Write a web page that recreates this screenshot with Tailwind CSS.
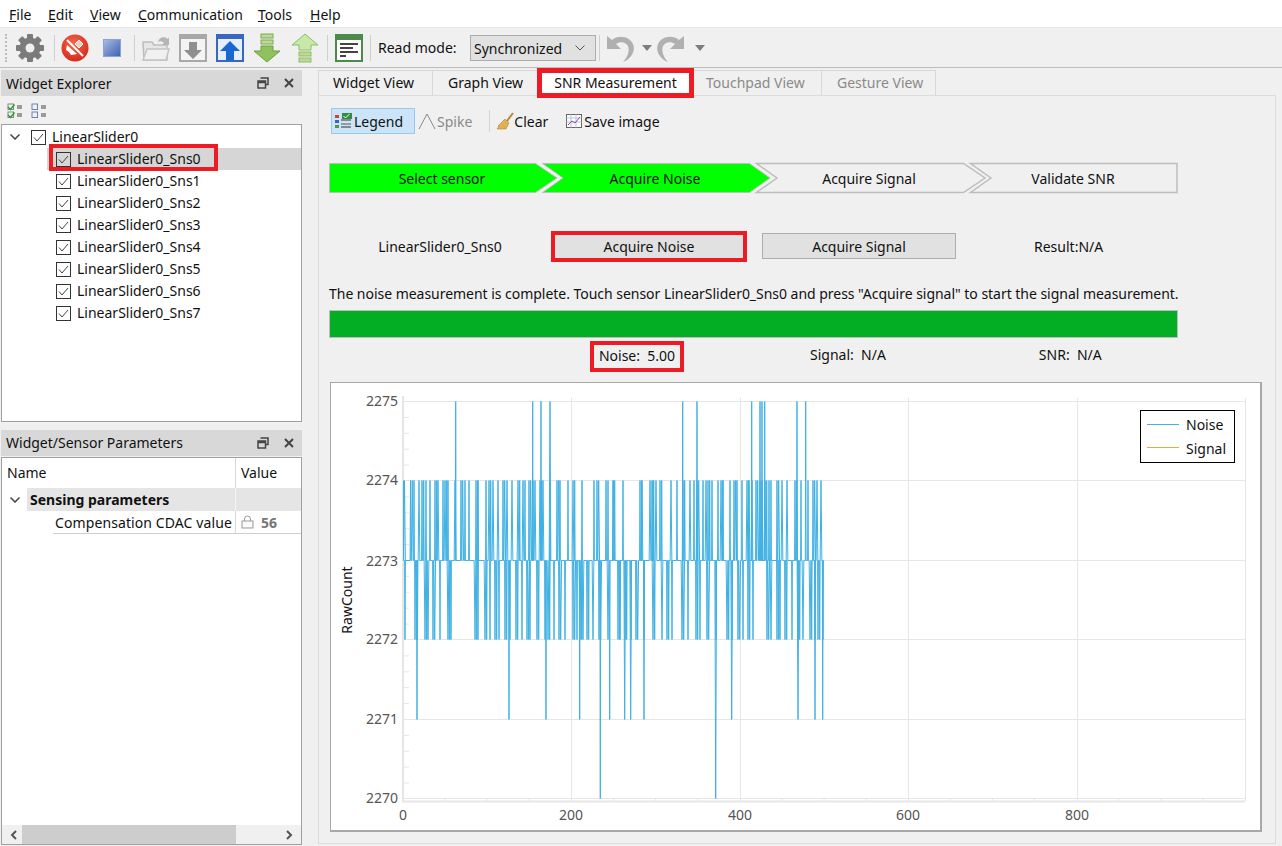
<!DOCTYPE html>
<html lang="en">
<head>
    <meta charset="UTF-8">
    <title>Tuner</title>
    <script src="https://cdn.jsdelivr.net/npm/@tailwindcss/browser@4"></script>
</head>
<body class="w-[1282px] h-[846px] overflow-hidden bg-[#f0f0f0] text-[14px] leading-[20px] text-[#111] font-['Noto_Sans','Open_Sans',sans-serif]">

    <!-- menu -->
    <div class="flex items-center h-[28px] bg-white border-b border-[#e6e6e6] pl-[9px] pt-[3px]">
        <span class="w-[39px]"><u>F</u>ile</span>
        <span class="w-[42px]"><u>E</u>dit</span>
        <span class="w-[48px]"><u>V</u>iew</span>
        <span class="w-[120px]"><u>C</u>ommunication</span>
        <span class="w-[52px]"><u>T</u>ools</span>
        <span><u>H</u>elp</span>
    </div>

    <!-- toolbar -->
    <div class="flex items-center h-[40px] border-b border-[#bcbcbc] pl-[5px]">
        <div class="w-[3px] h-[28px] border-l-2 border-dotted border-[#bbb] mr-[7px]"></div>
        <svg class="w-[30px] h-[30px]" viewBox="0 0 30 30">
            <g fill="#7b7b7b">
                <rect x="12" y="1" width="6" height="28" rx="1"/>
                <rect x="12" y="1" width="6" height="28" rx="1" transform="rotate(45 15 15)"/>
                <rect x="12" y="1" width="6" height="28" rx="1" transform="rotate(90 15 15)"/>
                <rect x="12" y="1" width="6" height="28" rx="1" transform="rotate(135 15 15)"/>
            </g>
            <circle cx="15" cy="15" r="7.5" fill="none" stroke="#7b7b7b" stroke-width="6"/>
            <circle cx="15" cy="15" r="4.5" fill="#efefef"/>
        </svg>
        <div class="w-px h-[26px] bg-[#cfcfcf] ml-[9px] mr-[6px]"></div>
        <svg class="w-[28px] h-[28px]" viewBox="0 0 28 28">
            <defs>
                <radialGradient id="redBall" cx="45%" cy="35%" r="70%"><stop offset="0" stop-color="#f4694a"/><stop offset="1" stop-color="#d5231b"/></radialGradient>
            </defs>
            <circle cx="14" cy="14" r="13.5" fill="url(#redBall)"/>
            <path d="M6 11l10 9-6 1-2-3-3-2z" fill="#fff"/>
            <path d="M14 10l4-4 4 4-4 4z" fill="#f6c9b8" stroke="#fff"/>
            <path d="M6 6l16 16" stroke="#fff" stroke-width="2"/>
        </svg>
        <svg class="w-[18px] h-[18px] ml-[14px]" viewBox="0 0 18 18">
            <defs>
                <linearGradient id="stopBlue" x1="0" y1="0" x2="1" y2="1"><stop offset="0" stop-color="#a9bde6"/><stop offset="1" stop-color="#3d5fae"/></linearGradient>
            </defs>
            <rect x="0.5" y="0.5" width="17" height="17" fill="url(#stopBlue)" stroke="#8ea3d0"/>
        </svg>
        <div class="w-px h-[26px] bg-[#cfcfcf] ml-[13px] mr-[6px]"></div>
        <svg class="w-[30px] h-[30px]" viewBox="0 0 30 30">
            <path d="M3 27L2 9h9l2 3h13v15z" fill="#e6e6e6" stroke="#bdbdbd" stroke-width="1.5"/>
            <path d="M2 27l4-11h22l-3 11z" fill="#f0f0f0" stroke="#c4c4c4" stroke-width="1.5"/>
            <path d="M17 9c1-5 6-6 10-3l1-2v8h-7l2-2c-2-2-4-2-6-1z" fill="#b5b5b5"/>
        </svg>
        <svg class="w-[28px] h-[28px] ml-[8px]" viewBox="0 0 28 28">
            <rect x="1" y="1" width="26" height="26" fill="#f4f4f4" stroke="#a8a8a8" stroke-width="2"/>
            <rect x="1" y="1" width="26" height="4" fill="#a8a8a8"/>
            <path d="M10 8h8v8h5l-9 9-9-9h5z" fill="#8f8f8f"/>
        </svg>
        <svg class="w-[28px] h-[28px] ml-[9px]" viewBox="0 0 28 28">
            <rect x="1" y="1" width="26" height="26" fill="#e6eefb" stroke="#3767c0" stroke-width="2"/>
            <rect x="1" y="1" width="26" height="4" fill="#3767c0"/>
            <path d="M14 7l10 10h-6v9h-8v-9H4z" fill="#1a66d0"/>
        </svg>
        <svg class="w-[28px] h-[30px] ml-[9px]" viewBox="0 0 28 30">
            <rect x="8" y="1" width="12" height="4" fill="#bcd99a" stroke="#7eaa4e"/>
            <rect x="8" y="7" width="12" height="4" fill="#bcd99a" stroke="#7eaa4e"/>
            <path d="M8 13h12v5h7L14 29 1 18h7z" fill="#8fc25d" stroke="#6f9f42"/>
        </svg>
        <svg class="w-[28px] h-[30px] ml-[10px]" viewBox="0 0 28 30">
            <path d="M14 1l13 11h-7v5H8v-5H1z" fill="#c9e8a8" stroke="#8dbd62"/>
            <rect x="8" y="19" width="12" height="4" fill="#bcd99a" stroke="#8dbd62"/>
            <rect x="8" y="25" width="12" height="4" fill="#bcd99a" stroke="#8dbd62"/>
        </svg>
        <div class="w-px h-[26px] bg-[#cfcfcf] ml-[8px] mr-[7px]"></div>
        <svg class="w-[28px] h-[28px]" viewBox="0 0 28 28">
            <rect x="1" y="1" width="26" height="26" fill="#fff" stroke="#4c8a4c" stroke-width="2"/>
            <rect x="1" y="1" width="26" height="5" fill="#4c8a4c"/>
            <path d="M5 10h18M5 14h13M5 18h18M5 22h6" stroke="#444" stroke-width="2"/>
        </svg>
        <div class="w-px h-[26px] bg-[#cfcfcf] ml-[7px] mr-[7px]"></div>
        <span class="w-[92px]">Read mode:</span>
        <div class="flex items-center justify-between w-[126px] h-[26px] bg-[#e1e1e1] border border-[#adadad] pl-[3px] pr-[10px]">
            <span class="pt-[2px]">Synchronized</span>
            <svg class="w-[10px] h-[6px]" viewBox="0 0 10 6"><path d="M0.5 0.5L5 5l4.5-4.5" fill="none" stroke="#555"/></svg>
        </div>
        <div class="w-px h-[26px] bg-[#cfcfcf] mx-[3px]"></div>
        <svg class="w-[32px] h-[28px] ml-[2px]" viewBox="0 0 32 28">
            <path d="M2 2V15H16L11 10C15 7 21 8 23 12 25 17 22 24 18 28 26 25 31 17 28 10 25 3 14 0 7 6Z" fill="#b0b0b0"/>
        </svg>
        <svg class="w-[10px] h-[6px] ml-[5px]" viewBox="0 0 10 6"><path d="M0 0h10L5 6z" fill="#7d7d7d"/></svg>
        <svg class="w-[32px] h-[28px] ml-[2px]" viewBox="0 0 32 28">
            <path d="M30 2V15H16L21 10C17 7 11 8 9 12 7 17 10 24 14 28 6 25 1 17 4 10 7 3 18 0 25 6Z" fill="#b0b0b0"/>
        </svg>
        <svg class="w-[10px] h-[6px] ml-[9px]" viewBox="0 0 10 6"><path d="M0 0h10L5 6z" fill="#7d7d7d"/></svg>
    </div>

    <div class="flex h-[778px]">
        <!-- left docks -->
        <aside class="flex flex-col w-[301px] ml-px pt-[2px] pb-[1px] shrink-0">
            <div class="flex items-center justify-between h-[26px] bg-[#d8d8d8] pl-[5px] pr-[7px]">
                <span class="pt-[2px]">Widget Explorer</span>
                <div class="flex items-center gap-[14px]">
                    <svg class="w-[12px] h-[12px]" viewBox="0 0 12 12"><path d="M3.500 1h7.500v6.500H8.500M1 4h7.500v7H1zM1 5.500h7.500" fill="none" stroke="#444" stroke-width="1.500"/></svg>
                    <svg class="w-[12px] h-[12px]" viewBox="0 0 12 12"><path d="M2 2l8 8M10 2l-8 8" stroke="#444" stroke-width="2"/></svg>
                </div>
            </div>
            <div class="flex items-center gap-[8px] h-[28px] pl-[6px] pt-[2px]">
                <svg class="w-[16px] h-[16px]" viewBox="0 0 16 16">
                    <rect x="1" y="1" width="5.500" height="5.500" fill="none" stroke="#888"/><rect x="1" y="9" width="5.500" height="5.500" fill="none" stroke="#888"/>
                    <path d="M1 4l2.500 2.500 4-5M1 12l2.500 2.500 4-5" fill="none" stroke="#2aa02a" stroke-width="1.500"/>
                    <path d="M10 3h5M10 5h5M10 11h5M10 13h5" stroke="#444"/>
                </svg>
                <svg class="w-[16px] h-[16px]" viewBox="0 0 16 16">
                    <rect x="1" y="1" width="5.500" height="5.500" fill="none" stroke="#6a83b0"/><rect x="1" y="9" width="5.500" height="5.500" fill="none" stroke="#6a83b0"/>
                    <path d="M10 3h5M10 5h5M10 11h5M10 13h5" stroke="#444"/>
                </svg>
            </div>
            <div class="relative h-[298px] bg-white border border-[#a0a0a0] pt-[1px]">
                <div class="flex items-center h-[22px]">
                    <svg class="w-[10px] h-[6px] ml-[8px]" viewBox="0 0 10 6"><path d="M0.500 0.500L5 5l4.500-4.500" fill="none" stroke="#444" stroke-width="1.500"/></svg>
                    <span class="flex items-center justify-center w-[15px] h-[15px] border border-[#333] ml-[11px]"><svg class="w-[11px] h-[9px]" viewBox="0 0 11 9"><path d="M1 4.500L4 8l6-7" fill="none" stroke="#444"/></svg></span>
                    <span class="ml-[6px]">LinearSlider0</span>
                </div>
                <div class="flex items-center h-[22px] ml-[45px] pl-[9px] bg-[#d6d6d6]">
                    <span class="flex items-center justify-center w-[15px] h-[15px] border border-[#333]"><svg class="w-[11px] h-[9px]" viewBox="0 0 11 9"><path d="M1 4.500L4 8l6-7" fill="none" stroke="#444"/></svg></span>
                    <span class="ml-[6px]">LinearSlider0_Sns0</span>
                </div>
                <div class="flex items-center h-[22px] ml-[45px] pl-[9px]">
                    <span class="flex items-center justify-center w-[15px] h-[15px] border border-[#333]"><svg class="w-[11px] h-[9px]" viewBox="0 0 11 9"><path d="M1 4.500L4 8l6-7" fill="none" stroke="#444"/></svg></span>
                    <span class="ml-[6px]">LinearSlider0_Sns1</span>
                </div>
                <div class="flex items-center h-[22px] ml-[45px] pl-[9px]">
                    <span class="flex items-center justify-center w-[15px] h-[15px] border border-[#333]"><svg class="w-[11px] h-[9px]" viewBox="0 0 11 9"><path d="M1 4.500L4 8l6-7" fill="none" stroke="#444"/></svg></span>
                    <span class="ml-[6px]">LinearSlider0_Sns2</span>
                </div>
                <div class="flex items-center h-[22px] ml-[45px] pl-[9px]">
                    <span class="flex items-center justify-center w-[15px] h-[15px] border border-[#333]"><svg class="w-[11px] h-[9px]" viewBox="0 0 11 9"><path d="M1 4.500L4 8l6-7" fill="none" stroke="#444"/></svg></span>
                    <span class="ml-[6px]">LinearSlider0_Sns3</span>
                </div>
                <div class="flex items-center h-[22px] ml-[45px] pl-[9px]">
                    <span class="flex items-center justify-center w-[15px] h-[15px] border border-[#333]"><svg class="w-[11px] h-[9px]" viewBox="0 0 11 9"><path d="M1 4.500L4 8l6-7" fill="none" stroke="#444"/></svg></span>
                    <span class="ml-[6px]">LinearSlider0_Sns4</span>
                </div>
                <div class="flex items-center h-[22px] ml-[45px] pl-[9px]">
                    <span class="flex items-center justify-center w-[15px] h-[15px] border border-[#333]"><svg class="w-[11px] h-[9px]" viewBox="0 0 11 9"><path d="M1 4.500L4 8l6-7" fill="none" stroke="#444"/></svg></span>
                    <span class="ml-[6px]">LinearSlider0_Sns5</span>
                </div>
                <div class="flex items-center h-[22px] ml-[45px] pl-[9px]">
                    <span class="flex items-center justify-center w-[15px] h-[15px] border border-[#333]"><svg class="w-[11px] h-[9px]" viewBox="0 0 11 9"><path d="M1 4.500L4 8l6-7" fill="none" stroke="#444"/></svg></span>
                    <span class="ml-[6px]">LinearSlider0_Sns6</span>
                </div>
                <div class="flex items-center h-[22px] ml-[45px] pl-[9px]">
                    <span class="flex items-center justify-center w-[15px] h-[15px] border border-[#333]"><svg class="w-[11px] h-[9px]" viewBox="0 0 11 9"><path d="M1 4.500L4 8l6-7" fill="none" stroke="#444"/></svg></span>
                    <span class="ml-[6px]">LinearSlider0_Sns7</span>
                </div>
                <!-- annotation -->
                <div class="absolute left-[47px] top-[19px] w-[169px] h-[27px] border-4 border-[#ed1c24]"></div>
            </div>

            <div class="flex items-center justify-between h-[26px] bg-[#d8d8d8] pl-[5px] pr-[7px] mt-[8px]">
                <span>Widget/Sensor Parameters</span>
                <div class="flex items-center gap-[14px]">
                    <svg class="w-[12px] h-[12px]" viewBox="0 0 12 12"><path d="M3.500 1h7.500v6.500H8.500M1 4h7.500v7H1zM1 5.500h7.500" fill="none" stroke="#444" stroke-width="1.500"/></svg>
                    <svg class="w-[12px] h-[12px]" viewBox="0 0 12 12"><path d="M2 2l8 8M10 2l-8 8" stroke="#444" stroke-width="2"/></svg>
                </div>
            </div>
            <div class="flex flex-col flex-1 bg-white border border-[#a0a0a0] mt-px">
                <div class="flex-1">
                    <div class="flex items-center h-[30px]">
                        <span class="w-[234px] pl-[5px] border-r border-[#d8d8d8] h-full flex items-center">Name</span>
                        <span class="pl-[5px]">Value</span>
                    </div>
                    <div class="flex items-center h-[23px]">
                        <svg class="w-[10px] h-[6px] ml-[8px]" viewBox="0 0 10 6"><path d="M0.500 0.500L5 5l4.500-4.500" fill="none" stroke="#444" stroke-width="1.500"/></svg>
                        <div class="flex flex-1 items-center h-full ml-[7px] bg-[#e5e5e5]">
                            <span class="w-[209px] pl-[3px] font-bold border-r border-[#f4f4f4] h-full flex items-center">Sensing parameters</span>
                        </div>
                    </div>
                    <div class="flex items-center h-[23px] ml-[51px] border-b border-[#cfcfcf]">
                        <span class="w-[183px] pl-[2px] pt-[2px] tracking-[0.1px] border-r border-[#d8d8d8] h-full flex items-center whitespace-nowrap">Compensation CDAC value</span>
                        <svg class="w-[13px] h-[14px] ml-[5px]" viewBox="0 0 13 14"><path d="M3.500 6V4a3 3 0 0 1 6 0v2" fill="none" stroke="#999"/><rect x="1" y="6" width="11" height="7" fill="#fafafa" stroke="#999"/></svg>
                        <span class="ml-[7px] pt-[2px] font-bold text-[#777]">56</span>
                    </div>
                </div>
                <div class="flex items-center justify-between h-[19px] bg-[#f0f0f0]">
                    <svg class="w-[10px] h-[10px] ml-[7px]" viewBox="0 0 10 10"><path d="M7 1L3 5l4 4" fill="none" stroke="#555" stroke-width="2"/></svg>
                    <div class="w-[214px] h-full bg-[#cdcdcd] ml-[3px] mr-auto"></div>
                    <svg class="w-[10px] h-[10px] mr-[7px]" viewBox="0 0 10 10"><path d="M3 1l4 4-4 4" fill="none" stroke="#555" stroke-width="2"/></svg>
                </div>
            </div>
        </aside>

        <!-- right pane -->
        <main class="flex flex-col w-[958px] ml-[16px] pt-[2px] pb-[2px]">
            <div class="flex h-[26px] -mb-px items-stretch">
                <div class="flex items-center w-[115px] pl-[14px] bg-[#f0f0f0] border border-[#d8d8d8]">Widget View</div>
                <div class="flex items-center w-[105px] pl-[15px] border-y border-r border-[#d8d8d8]">Graph View</div>
                <div class="relative z-10 flex items-center justify-center w-[157px] h-[30px] -mt-[2px] -ml-px bg-white border-[5px] border-[#ed1c24]">SNR Measurement</div>
                <div class="flex items-center w-[128px] pl-[12px] text-[#8a8a8a] border-y border-r border-[#d8d8d8]">Touchpad View</div>
                <div class="flex items-center w-[114px] pl-[15px] text-[#8a8a8a] border-y border-r border-[#d8d8d8]">Gesture View</div>
            </div>
            <div class="flex-1 border border-[#dcdcdc] pl-[10px] pr-[14px]">
                <!-- chart tools -->
                <div class="flex items-center h-[26px] mt-[12px] pl-[2px]">
                    <div class="flex items-center w-[84px] h-[26px] bg-[#cce4f7] border border-[#99c9ee] pl-[3px]">
                        <svg class="w-[18px] h-[18px]" viewBox="0 0 18 18">
                            <rect x="0" y="3" width="4" height="3" fill="#d04040"/><rect x="0" y="8" width="4" height="3" fill="#4060c0"/><rect x="0" y="13" width="4" height="3" fill="#40a040"/>
                            <path d="M6 8h10" stroke="#333"/><path d="M6 15h10" stroke="#333"/>
                            <rect x="7" y="1" width="10" height="6" fill="#2f8f3f"/><path d="M8.500 4l2 2 4-4" fill="none" stroke="#fff"/>
                            <path d="M6 12h10" stroke="#555"/>
                        </svg>
                        <span class="ml-[1px] pt-[2px]">Legend</span>
                    </div>
                    <svg class="w-[18px] h-[18px] ml-[3px]" viewBox="0 0 18 18"><path d="M1 17L9 2l8 15" fill="none" stroke="#8a8a8a"/></svg>
                    <span class="text-[#8a8a8a] ml-[1px] pt-[2px]">Spike</span>
                    <div class="w-px h-[22px] bg-[#d4d4d4] ml-[17px] mr-[6px]"></div>
                    <svg class="w-[18px] h-[18px]" viewBox="0 0 18 18"><path d="M17 1l-6 8" stroke="#b58a3a" stroke-width="2"/><path d="M9 7l4 4-3 6H1l2-3-1 0z" fill="#e2b050" stroke="#a07a2a" stroke-width=".5"/></svg>
                    <span class="pt-[2px]">Clear</span>
                    <svg class="w-[16px] h-[16px] ml-[18px]" viewBox="0 0 16 16"><rect x=".5" y="1.500" width="15" height="13" fill="#fff" stroke="#666"/><path d="M.5 5h15M.5 9h15M5 1.500v13M10 1.500v13" stroke="#b8c6dc"/><path d="M2 12l4-4 3 2 5-6" fill="none" stroke="#a0409a"/></svg>
                    <span class="ml-[2px] pt-[2px]">Save image</span>
                </div>

                <!-- steps -->
                <svg class="block mt-[28px]" width="860" height="32" viewBox="329 162 860 32">
                    <g font-size="14" text-anchor="middle" fill="#111">
                        <path d="M329.500 163.500H535.500L557 178 535.500 192.500H329.500Z" fill="#00ff00" stroke="#bdbdbd"/>
                        <path d="M542.500 163.500H749.500L770 178 749.500 192.500H542.500L563 178Z" fill="#00ff00" stroke="#bdbdbd"/>
                        <path d="M756.500 163.500H963.500L985 178 963.500 192.500H756.500L777 178Z" fill="#f0f0f0" stroke="#bdbdbd" stroke-width="1.500"/>
                        <path d="M970.500 163.500H1177V192.500H970.500L991 178Z" fill="#f0f0f0" stroke="#bdbdbd" stroke-width="1.500"/>
                        <text x="442" y="184">Select sensor</text>
                        <text x="655" y="184">Acquire Noise</text>
                        <text x="869" y="184">Acquire Signal</text>
                        <text x="1073" y="184">Validate SNR</text>
                    </g>
                </svg>

                <!-- actions -->
                <div class="flex items-center h-[32px] mt-[36px]">
                    <div class="w-[222px] text-center pt-[2px]">LinearSlider0_Sns0</div>
                    <div class="flex items-center justify-center w-[196px] h-[31px] pt-[2px] bg-[#e1e1e1] border-4 border-[#ed1c24]">Acquire Noise</div>
                    <div class="flex items-center justify-center w-[194px] h-[26px] pt-[2px] ml-[15px] bg-[#e1e1e1] border border-[#adadad]">Acquire Signal</div>
                    <div class="ml-[78px] pt-[2px]">Result:N/A</div>
                </div>

                <p class="mt-[22px] whitespace-nowrap tracking-[-0.03px]">The noise measurement is complete. Touch sensor LinearSlider0_Sns0 and press "Acquire signal" to start the signal measurement.</p>
                <div class="w-[849px] h-[28px] mt-[6px] bg-[#04ae24] border border-[#bcbcbc]"></div>

                <div class="flex items-center h-[31px] mt-[3px]">
                    <div class="flex items-center justify-center w-[94px] h-[31px] ml-[261px] pb-[1px] border-4 border-[#ed1c24] whitespace-pre">Noise:  5.00</div>
                    <div class="ml-[126px] pb-[3px] whitespace-pre">Signal:  N/A</div>
                    <div class="ml-[153px] pb-[3px] whitespace-pre">SNR:  N/A</div>
                </div>

                <!-- chart -->
                <div class="w-[932px] h-[450px] mt-[10px] ml-px bg-white border-t border-l border-r-2 border-b-2 border-[#a8a8a8]">
                    <svg width="929" height="447" viewBox="331 383 929 447" class="block">
                        <g stroke="#e6e6e6">
                            <path d="M403 401.500H1245M403 480.500H1245M403 560.500H1245M403 639.500H1245M403 719.500H1245M403 798.500H1245"/>
                            <path d="M571.500 398V801M740.500 398V801M908.500 398V801M1077.500 398V801M1245.500 398V801"/>
                            <path d="M403 396V802M402 801.500H1245" stroke-width="2"/>
                        </g>
                        <path id="minorTicks" stroke="#e6e6e6" fill="none"/>
                        <path id="noiseLine" fill="none" stroke="#3fb1e3" stroke-width="1"/>
                        <g font-size="14" fill="#555">
                            <g text-anchor="end">
                                <text x="398" y="406">2275</text>
                                <text x="398" y="485">2274</text>
                                <text x="398" y="566">2273</text>
                                <text x="398" y="644">2272</text>
                                <text x="398" y="724">2271</text>
                                <text x="398" y="803">2270</text>
                            </g>
                            <g text-anchor="middle">
                                <text x="403" y="820">0</text>
                                <text x="571" y="820">200</text>
                                <text x="740" y="820">400</text>
                                <text x="908" y="820">600</text>
                                <text x="1077" y="820">800</text>
                            </g>
                        </g>
                        <text x="0" y="0" font-size="14" fill="#111" text-anchor="middle" transform="translate(352 600) rotate(-90)">RawCount</text>
                        <rect x="1140.500" y="410.500" width="94" height="52" fill="#fff" stroke="#000"/>
                        <path d="M1147 424.500h32" stroke="#3fb1e3"/>
                        <path d="M1147 447.500h32" stroke="#e0a94c"/>
                        <text x="1186" y="430" font-size="14" fill="#111">Noise</text>
                        <text x="1186" y="454" font-size="14" fill="#111">Signal</text>
                    </svg>
                </div>
            </div>
        </main>
    </div>

<script>
// pulses read off the plot, as pixel positions along the x axis
var high = [404.5,410.5,414,419,422,426,430,435,438,443,445,448,455,461,465,469,476,478,486,489,493,498,503,507,512,518,523,525,529,533,535,540,543,550,557,560,568,573,582,594,597,606,608,613,
    613.5,623,640,642,650,652,653,656,660,671,677,683,690,694,697,703,706,708,712,718,721,723,730,734,737,742,747,749,752,756,760,762,765,769,771,777,782,787,795,801,808,813,817,821];
var low = [405,415,417.5,425,428,433,440,448,451,475,478,485,490,495,499,505,510,516,522,527,530,537,545,548,554,559,565,573,577,580,583,587,593,599,608,618,620,625,631,636,644,653,662,667,672,682,688,696,700,707,716,727,732,738,743,748,753,767,771,777,780,785,792,798,803,810,815,818,823];
var top5 = [455.7,532.7,541,550,682.7,697,751.7,760,762,764.7,797,805.7];
var down1 = [417,509,546,579.7,609.7,624.7,630.7,644,731.7,798,815,822.7];
var down0 = [600.3,715.7];

var ev = [];
high.forEach(function(x, i) {
    ev.push([x, 480.5]);
    if (i % 3 == 1) ev.push([x + 1.7, 480.5]);
});
low.forEach(function(x, i) {
    ev.push([x, 639.5]);
    if (i % 2 == 1) ev.push([x + 1.7, 639.5]);
});
top5.forEach(function(x) { ev.push([x, 401.5]); });
down1.forEach(function(x) { ev.push([x, 719.5]); });
down0.forEach(function(x) { ev.push([x, 798.5]); });
ev.sort(function(a, b) { return a[0] - b[0]; });

// some samples lean wider, which gives the pale doubled strokes of the plot
var d = "M403.5 480.5L403.5 560.5";
ev.forEach(function(p, i) {
    var w = i % 3 == 0 ? 0.85 : 0.4;
    d += "L" + (p[0] - w).toFixed(2) + " 560.5L" + p[0].toFixed(2) + " " + p[1] + "L" + (p[0] + w).toFixed(2) + " 560.5";
});
document.getElementById("noiseLine").setAttribute("d", d);

var t = "";
for (var i = 0; i < 25; i++) {
    var y = 401.5 + i * 15.9;
    if (i % 5) t += "M403 " + y.toFixed(1) + "h6";
}
for (var k = 0; k < 20; k++) {
    var x = 403 + k * 42.1;
    if (k % 4) t += "M" + x.toFixed(1) + " 798v3";
}
document.getElementById("minorTicks").setAttribute("d", t);
</script>
</body>
</html>
